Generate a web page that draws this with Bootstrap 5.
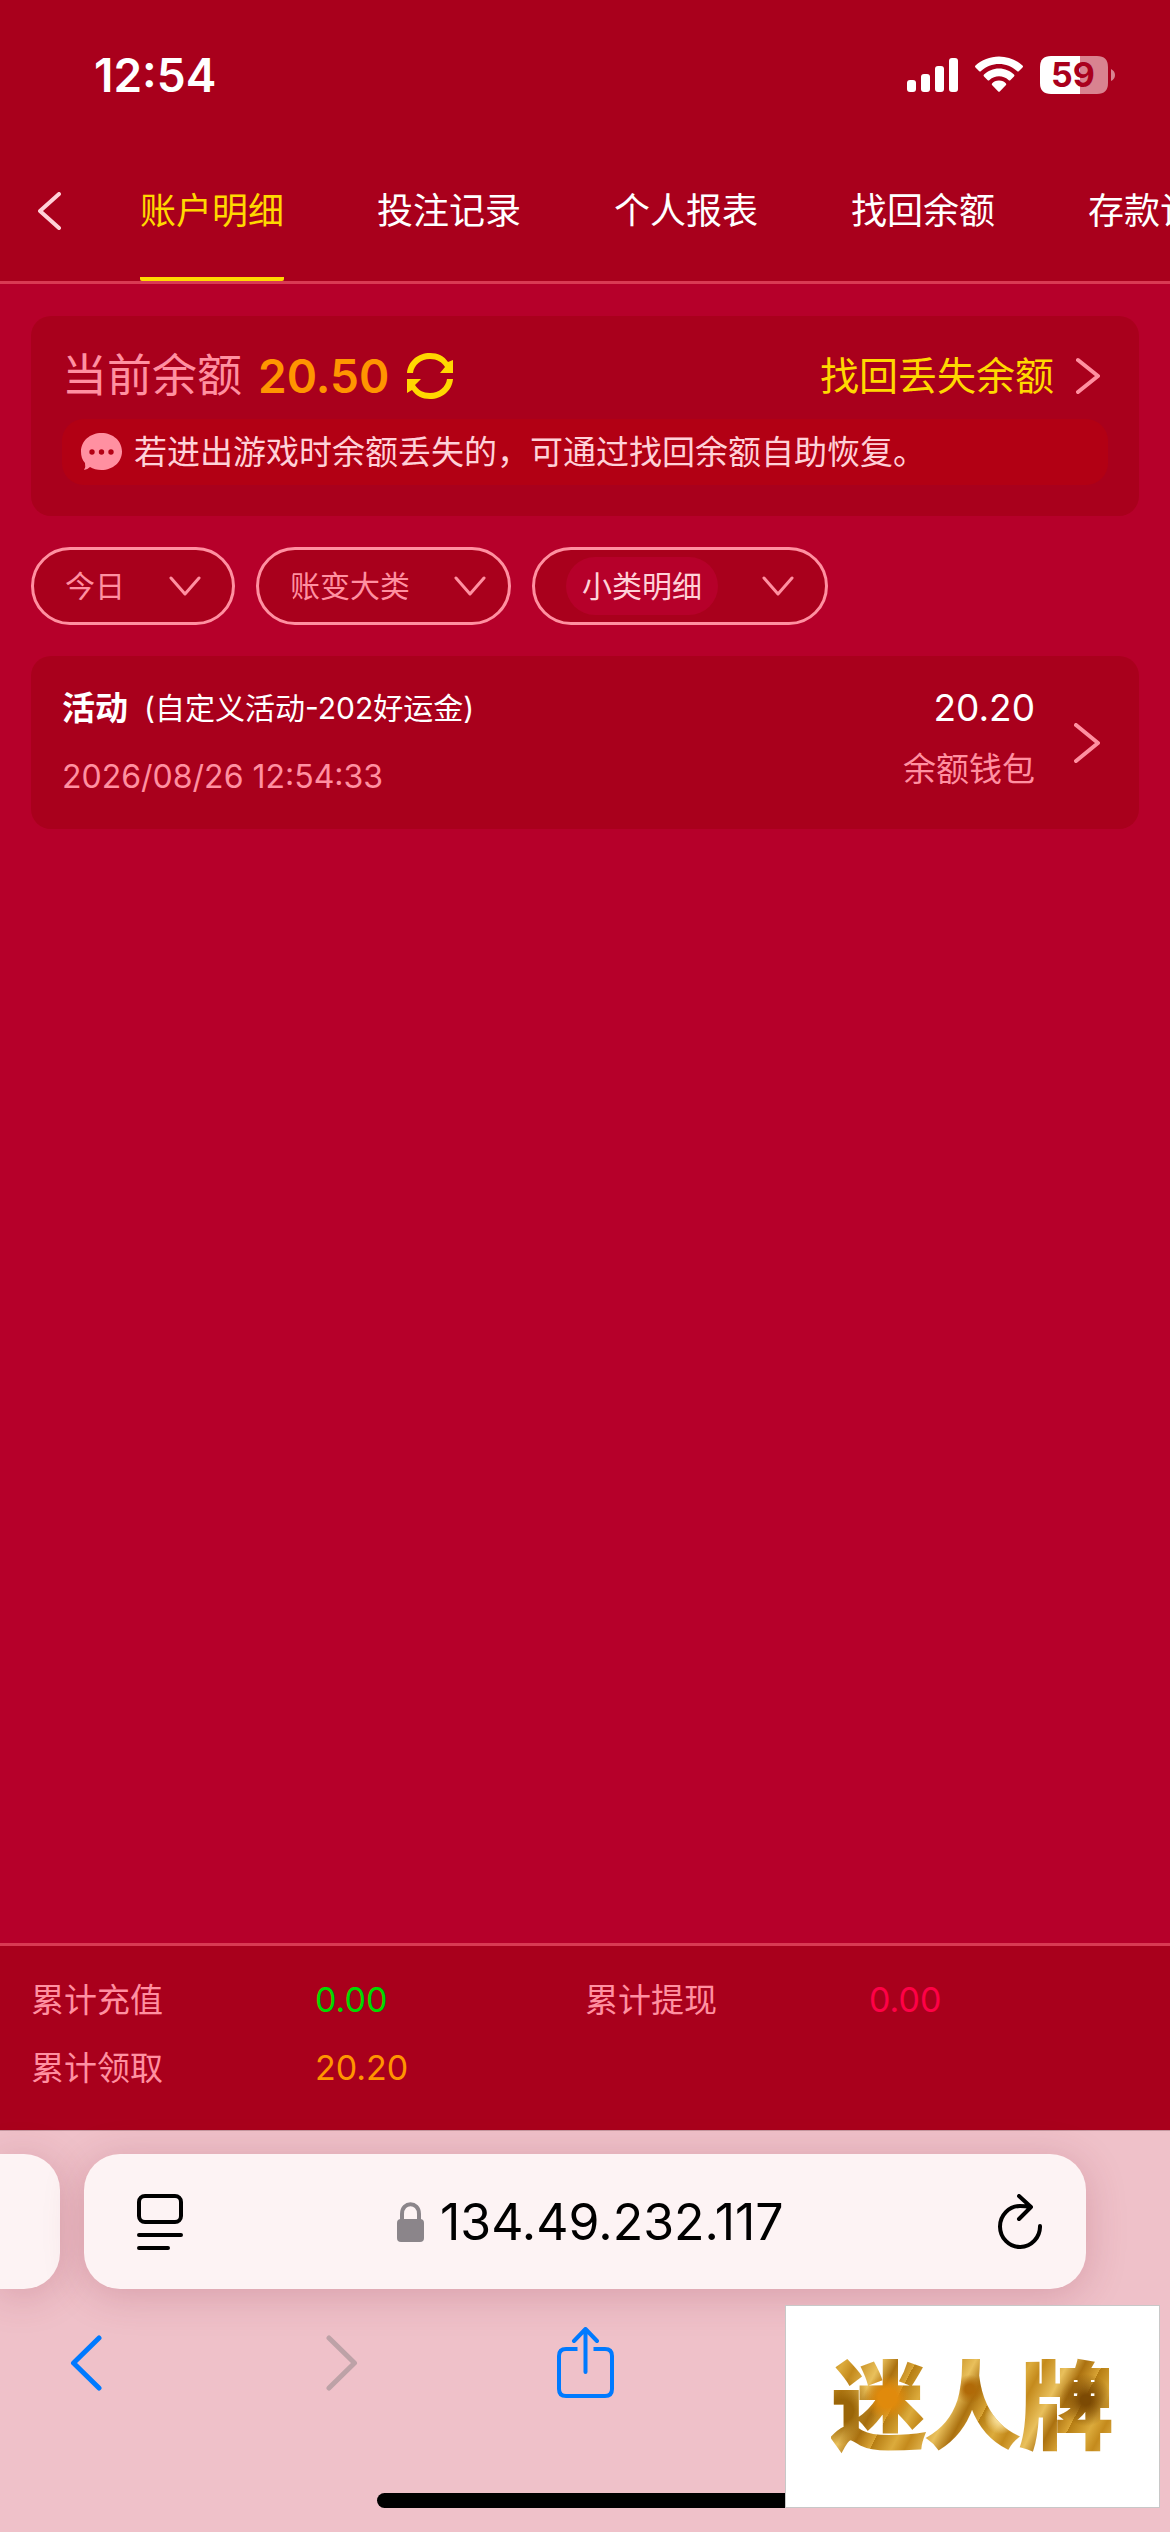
<!DOCTYPE html>
<html lang="zh-CN">
<head>
<meta charset="utf-8">
<meta name="viewport" content="width=device-width, initial-scale=1">
<title>账户明细</title>
<link rel="stylesheet" href="https://cdn.jsdelivr.net/npm/bootstrap@5.3.0/dist/css/bootstrap.min.css">
<style>
:root{--deep:#a9001c;--page:#b6002a;--rose:#ff90a1;--pale:#ffd1d8;--gold:#ffd800;--orange:#ff9500;--line:#d93a53}
body{font-family:Inter,"Noto Sans CJK SC",sans-serif;font-size:33px;line-height:42px;background:var(--page);color:#fff}
svg{display:block;flex:none}
.icon-btn{background:none;border:0;padding:0;color:inherit}
a{text-decoration:none;color:inherit}
.top-bar{background:var(--deep);border-bottom:3px solid var(--line)}
.status{height:141px;padding:8px 55px 0 94px}
.clock{font-size:46px;font-weight:600}
.tabs-row{height:140px}
.back-btn{width:140px;padding-left:38px;color:var(--pale)}
.tab-list{gap:93px;font-size:36px}
.tab-list a{display:flex;align-items:center;height:140px;padding-top:4px;border-bottom:4px solid transparent}
.tab-list a.active{color:var(--gold);border-color:var(--gold);border-radius:2px}
.content{padding:32px 31px;gap:31px}
.panel{background:var(--deep);border-radius:20px;padding:31px}
.balance-row{height:58px;margin-bottom:14px}
.balance-label{font-size:45px;color:var(--rose)}
.balance-value{font-size:46px;font-weight:600;color:var(--orange);margin:0 18px 0 16px}
.recover{font-size:39px;color:var(--gold);gap:22px;padding-right:8px}
.notice{background:#b20014;border-radius:22px;height:66px;gap:12px;padding-left:19px;color:var(--pale)}
.rose{color:var(--rose)}
.filters{gap:21px;font-size:30px}
.pill{height:78px;border:3px solid var(--rose);border-radius:39px;background:var(--deep);color:var(--rose);padding:0 31px;gap:44px}
.pill.snug{padding-right:22px}
.pill .form-select{appearance:none;background:none;border:0;border-radius:29px;padding:0;font-size:30px;line-height:58px;height:58px;color:inherit}
.pill .form-select.chosen{background:var(--page);color:var(--pale);padding:0 16px}
.record-lines{gap:27px}
.record-title{font-size:33px;font-weight:700}
.record-note{font-size:30px}
.record-date{font-size:32px;color:var(--rose)}
.record-sum{gap:19px;margin-right:39px}
.sum-value{font-size:37px}
.totals{background:var(--deep);border-top:3px solid var(--line);padding:20px 31px 28px}
.totals dt{width:284px;font-weight:400;color:var(--rose)}
.totals dd{font-size:34px;margin:0}
.total-line{height:68px}
.green{color:#00d900}.orange{color:var(--orange)}.pink{color:#ff0046}
.browser{background:#efc1c9;border-top:1px solid #c497a0;padding-top:23px;color:#000}
.addr-row{gap:24px}
.addr-card{background:#fdf3f4;height:135px;border-radius:36px;box-shadow:0 6px 40px rgba(130,30,55,.22)}
.addr-prev{width:60px;border-radius:0 36px 36px 0}
.addr-main{margin-right:84px;padding:0 44px 0 53px}
.addr-input{width:344px;border:0;background:none;padding:0;font-size:50px;color:#000}
.tools{height:148px;padding-left:58px;width:calc(50% + 29px);color:#007aff}
.home-bar{width:416px;height:15px;border-radius:8px;background:#000;margin:56px auto 24px}
.stamp{right:10px;bottom:24px;width:375px;height:203px;padding-bottom:14px;background:#fff;border:1px solid #c8c8c8}
.stamp-text{font-family:"Noto Sans CJK SC",sans-serif;font-weight:900;font-style:oblique 6deg;font-size:94px;line-height:110px;color:transparent;-webkit-text-stroke:2px transparent;-webkit-background-clip:text;background-clip:text;
background-image:radial-gradient(circle at 20% 48%,#e08a0c 0 4%,transparent 10%),radial-gradient(circle at 90% 50%,#7c4a04 0 2%,transparent 10%),radial-gradient(circle at 49% 40%,#b06a08 0 3%,transparent 9%),radial-gradient(circle at 4% 60%,#9a6508 0 4%,transparent 12%),radial-gradient(circle at 60% 66%,#f6dc94 0 3%,transparent 9%),repeating-linear-gradient(118deg,#b57c12 0,#dcab3c 19px,#c48a1c 31px,#e9c05c 52px,#ab7110 67px,#d9a435 83px)}
</style>
</head>
<body class="d-flex flex-column min-vh-100">
<header class="top-bar">
  <div class="status d-flex align-items-center justify-content-between">
    <span class="clock">12:54</span>
    <svg width="208" height="40" viewBox="907 54 208 40" fill="#fff" aria-label="信号、无线网络、电量 59%">
      <rect x="907" y="79" width="9" height="12" rx="3"/><rect x="921" y="73" width="9" height="18" rx="3"/><rect x="935" y="65" width="9" height="26" rx="3"/><rect x="949" y="57" width="9" height="34" rx="3"/>
      <path d="M999 55.500C990 55.500 981.500 59 975.500 64.500Q974.500 65.500 975.500 66.500L979 70Q980 71 981 70C991 60.500 1007 60.500 1017 70Q1018 71 1019 70L1022.500 66.500Q1023.500 65.500 1022.500 64.500C1016.500 59 1008 55.500 999 55.500Z"/>
      <path d="M999 67.500C993 67.500 988 70 984 73.500Q983 74.500 984 75.500L987.500 79Q988.500 80 989.500 79C995 74 1003 74 1008.500 79Q1009.500 80 1010.500 79L1014 75.500Q1015 74.500 1014 73.500C1010 70 1005 67.500 999 67.500Z"/>
      <path d="M999 79.500C996 79.500 993.500 80.700 992 82.500Q991.500 83.500 992 84L998 90.300Q999 91.300 1000 90.300L1006 84Q1006.500 83.500 1006 82.500C1004.500 80.700 1002 79.500 999 79.500Z"/>
      <path d="M1051 55H1080V93H1051Q1040 93 1040 82V66Q1040 55 1051 55Z"/>
      <path fill="#d98390" d="M1080 55H1097Q1108 55 1108 66V82Q1108 93 1097 93H1080ZM1111 68Q1115 70 1115 74T1111 80Z"/>
      <text x="1073" y="86" text-anchor="middle" font-family="Inter" font-weight="700" font-size="34" fill="#a9001c">59</text>
    </svg>
  </div>
  <nav class="tabs-row d-flex overflow-hidden" aria-label="账户">
    <button class="icon-btn back-btn flex-shrink-0" type="button" aria-label="返回"><svg width="23" height="38" viewBox="0 0 23 38" fill="none" stroke="currentColor" stroke-width="4" stroke-linecap="round" stroke-linejoin="round"><path d="M21 2L2 19L21 36"/></svg></button>
    <div class="tab-list d-flex flex-nowrap text-nowrap">
      <a class="active" href="#" aria-current="page">账户明细</a><a href="#">投注记录</a><a href="#">个人报表</a><a href="#">找回余额</a><a href="#">存款记录</a>
    </div>
  </nav>
</header>

<main class="content d-flex flex-column flex-grow-1">
  <section class="panel">
    <div class="balance-row d-flex align-items-center">
      <span class="balance-label">当前余额</span><span class="balance-value">20.50</span>
      <button class="icon-btn" type="button" aria-label="刷新余额"><svg width="46" height="48" viewBox="0 0 46 48" fill="#ffd800"><path d="M0 21C1 9 11 1 23 1C31 1 37 4 41 10L46 8V21H33L38 15C35 10 30 7 23 7C14 7 7 13 6 21ZM46 27C45 39 35 47 23 47C15 47 9 44 5 38L0 41V27H14L8 33C11 38 16 41 23 41C32 41 39 35 40 27Z"/></svg></button>
      <a class="recover d-flex align-items-center ms-auto" href="#">找回丢失余额<svg width="24" height="38" viewBox="0 0 24 38" fill="none" stroke="#ff90a1" stroke-width="4" stroke-linecap="round" stroke-linejoin="round"><path d="M2 3L22 19L2 35"/></svg></a>
    </div>
    <div class="notice d-flex align-items-center">
      <svg width="41" height="38" viewBox="0 0 41 38"><path fill="#ff90a1" d="M20.500 0C32 0 41 8 41 18.500S32 37 20.500 37C16 37 12 36 9 34Q6 37 3 37Q5 34 4 30C1 27 0 23 0 18.500C0 8 9 0 20.500 0Z"/><g fill="#b20014"><circle cx="11" cy="19" r="2.700"/><circle cx="20.500" cy="19" r="2.700"/><circle cx="30" cy="19" r="2.700"/></g></svg>
      <span>若进出游戏时余额丢失的，可通过找回余额自助恢复。</span>
    </div>
  </section>

  <form class="filters d-flex">
    <div class="pill d-flex align-items-center"><select class="form-select w-auto" aria-label="日期"><option>今日</option></select><svg width="32" height="20" viewBox="0 0 32 20" fill="none" stroke="currentColor" stroke-width="3" stroke-linecap="round" stroke-linejoin="round"><path d="M2 2L16 18L30 2"/></svg></div>
    <div class="pill snug d-flex align-items-center"><select class="form-select w-auto" aria-label="账变大类"><option>账变大类</option></select><svg width="32" height="20" viewBox="0 0 32 20" fill="none" stroke="currentColor" stroke-width="3" stroke-linecap="round" stroke-linejoin="round"><path d="M2 2L16 18L30 2"/></svg></div>
    <div class="pill d-flex align-items-center"><select class="form-select chosen w-auto" aria-label="小类明细"><option>小类明细</option></select><svg width="32" height="20" viewBox="0 0 32 20" fill="none" stroke="currentColor" stroke-width="3" stroke-linecap="round" stroke-linejoin="round"><path d="M2 2L16 18L30 2"/></svg></div>
  </form>

  <a class="panel d-flex" href="#">
    <div class="record-lines d-flex flex-column">
      <div class="d-flex"><span class="record-title">活动</span><span class="record-note ms-3">(自定义活动-202好运金)</span></div>
      <div class="record-date">2026/08/26 12:54:33</div>
    </div>
    <div class="record-sum d-flex flex-column text-end ms-auto">
      <div class="sum-value">20.20</div>
      <div class="rose">余额钱包</div>
    </div>
    <svg class="align-self-center me-2" width="26" height="40" viewBox="0 0 26 40" fill="none" stroke="#ff90a1" stroke-width="4" stroke-linecap="round" stroke-linejoin="round"><path d="M2 2L24 20L2 38"/></svg>
  </a>
</main>

<footer class="totals">
  <dl class="row g-0 mb-0">
    <div class="total-line col-6 d-flex align-items-center"><dt>累计充值</dt><dd class="green">0.00</dd></div>
    <div class="total-line col-6 d-flex align-items-center"><dt>累计提现</dt><dd class="pink">0.00</dd></div>
    <div class="total-line col-6 d-flex align-items-center"><dt>累计领取</dt><dd class="orange">20.20</dd></div>
  </dl>
</footer>

<div class="browser position-relative">
  <div class="addr-row d-flex">
    <div class="addr-card addr-prev"></div>
    <div class="addr-card addr-main d-flex align-items-center justify-content-between flex-grow-1">
      <button class="icon-btn" type="button" aria-label="页面菜单"><svg width="46" height="56" viewBox="0 0 46 56" fill="none" stroke="#000" stroke-width="4" stroke-linecap="round"><rect x="2" y="2" width="42" height="26" rx="6"/><path d="M2 41H44M2 54H31"/></svg></button>
      <div class="d-flex align-items-center gap-3">
        <svg width="27" height="40" viewBox="0 0 27 40"><path fill="none" stroke="#8b858a" stroke-width="4" d="M5 18V12C5 -1 22 -1 22 12V18"/><rect y="17" width="27" height="23" rx="4" fill="#8b858a"/></svg>
        <input class="addr-input" type="text" aria-label="网址" value="134.49.232.117">
      </div>
      <button class="icon-btn" type="button" aria-label="重新加载"><svg width="44" height="56" viewBox="0 0 44 56" fill="none" stroke="#000" stroke-width="4" stroke-linecap="round" stroke-linejoin="round"><path d="M42 32A20 20.500 0 1 1 22 12Q28 12 32 13M21 2L33 13L21 25"/></svg></button>
    </div>
  </div>
  <div class="tools d-flex align-items-center justify-content-between">
    <button class="icon-btn" type="button" aria-label="后退"><svg width="57" height="56" viewBox="0 0 57 56" fill="none" stroke="currentColor" stroke-width="5" stroke-linecap="round" stroke-linejoin="round"><path d="M41 3L15.500 28L41 53"/></svg></button>
    <button class="icon-btn" type="button" aria-label="前进"><svg width="57" height="56" viewBox="0 0 57 56" fill="none" stroke="#bda2a7" stroke-width="5" stroke-linecap="round" stroke-linejoin="round"><path d="M21 3L46.500 28L21 53"/></svg></button>
    <button class="icon-btn" type="button" aria-label="分享"><svg width="57" height="72" viewBox="0 0 57 72" fill="none" stroke="currentColor" stroke-width="4" stroke-linecap="round" stroke-linejoin="round"><path stroke-linecap="butt" d="M20.500 22H9Q2 22 2 29V62Q2 69 9 69H48Q55 69 55 62V29Q55 22 48 22H36.500"/><path d="M28.500 45V3M17 14L28.500 2L40 14"/></svg></button>
  </div>
  <div class="home-bar"></div>
  <div class="stamp position-absolute d-flex align-items-center justify-content-center"><span class="stamp-text">迷人牌</span></div>
</div>
<script src="https://cdn.jsdelivr.net/npm/bootstrap@5.3.0/dist/js/bootstrap.bundle.min.js"></script>
</body>
</html>
